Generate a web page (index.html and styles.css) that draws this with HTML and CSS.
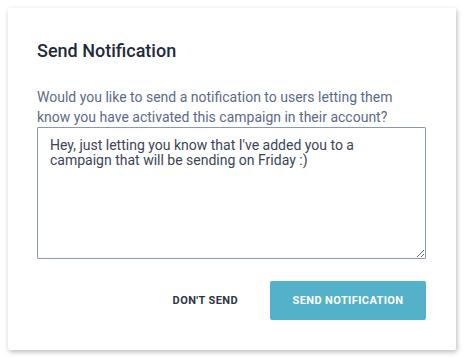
FILE: index.html
```html
<!DOCTYPE html>
<html>

<head>
    <title>Send Notification</title>
    <link rel="stylesheet" href="styles.css">
</head>

<body>
    <div class="modal">
        <h2 class="modal-title">Send Notification</h2>
        <p class="modal-text">Would you like to send a notification to users letting them know you have activated this campaign in their account?</p>
        <textarea class="message">Hey, just letting you know that I've added you to a campaign that will be sending on Friday :)</textarea>
        <div class="actions">
            <button class="btn btn-plain">DON'T SEND</button>
            <button class="btn btn-primary">SEND NOTIFICATION</button>
        </div>
    </div>
</body>

</html>
```

FILE: styles.css
```css
body {
    margin: 0;
    padding: 8px 10px 9px 8px;
    background-color: white;
    font-family: Roboto, "Liberation Sans", sans-serif;
}

.modal {
    background-color: white;
    box-shadow: 1px 2px 5px rgba(0, 0, 0, 0.28);
    border-radius: 2px;
    padding: 32px 30px 30px 29px;
}

.modal-title {
    margin: 0;
    font-size: 18px;
    font-weight: 500;
    line-height: 22px;
    color: #1f2a3b;
}

.modal-text {
    margin: 25px 0 0 0;
    font-size: 14px;
    line-height: 20px;
    color: #5b6b86;
}

.message {
    display: block;
    box-sizing: border-box;
    width: 100%;
    height: 132px;
    margin: 0;
    padding: 10px 12px 7px 12px;
    border: 1px solid #8a98ad;
    border-radius: 1px;
    font-family: Roboto, "Liberation Sans", sans-serif;
    font-size: 14px;
    line-height: 15px;
    color: #3b4555;
    resize: vertical;
}

.actions {
    display: flex;
    justify-content: flex-end;
    align-items: center;
    gap: 32px;
    margin-top: 22px;
}

.btn {
    border: none;
    border-radius: 2px;
    font-family: Roboto, "Liberation Sans", sans-serif;
    font-size: 11px;
    font-weight: bold;
    letter-spacing: 0.4px;
    height: 39px;
    cursor: pointer;
}

.btn-plain {
    background-color: white;
    color: #2c3547;
    padding: 0;
}

.btn-primary {
    background-color: #53b1c9;
    color: white;
    width: 156px;
}
```
